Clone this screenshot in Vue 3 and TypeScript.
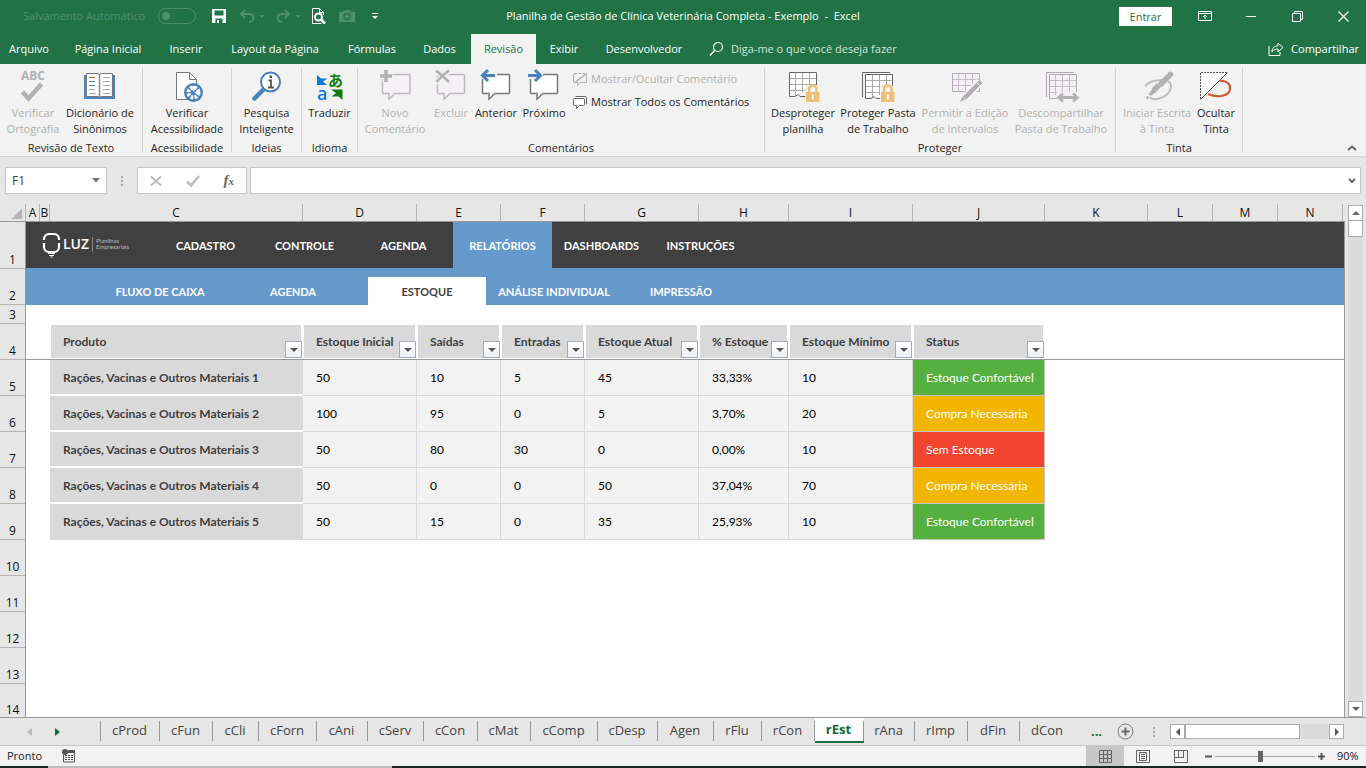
<script setup lang="ts">
import { ref } from 'vue'

interface Column { letter: string; width: number }
interface Product { name: string; values: string[]; status: string; tone: string }

const menu = [
  { label: 'Arquivo', width: 58 },
  { label: 'Página Inicial', width: 100 },
  { label: 'Inserir', width: 56 },
  { label: 'Layout da Página', width: 122 },
  { label: 'Fórmulas', width: 72 },
  { label: 'Dados', width: 63 },
  { label: 'Revisão', width: 65 },
  { label: 'Exibir', width: 56 },
  { label: 'Desenvolvedor', width: 104 },
]

const columns: Column[] = [
  { letter: 'A', width: 14 }, { letter: 'B', width: 10 }, { letter: 'C', width: 253 },
  { letter: 'D', width: 114 }, { letter: 'E', width: 84 }, { letter: 'F', width: 84 },
  { letter: 'G', width: 114 }, { letter: 'H', width: 90 }, { letter: 'I', width: 124 },
  { letter: 'J', width: 132 }, { letter: 'K', width: 103 }, { letter: 'L', width: 65 },
  { letter: 'M', width: 65 }, { letter: 'N', width: 65 },
]
const tableColumns = columns.slice(2, 10)

const rowHeights = [47, 36, 19, 36, 36, 36, 36, 36, 36, 36, 36, 36, 36, 33]

const headings = ['Produto', 'Estoque Inicial', 'Saídas', 'Entradas', 'Estoque Atual', '% Estoque', 'Estoque Mínimo', 'Status']

const products: Product[] = [
  { name: 'Rações, Vacinas e Outros Materiais 1', values: ['50', '10', '5', '45', '33,33%', '10'], status: 'Estoque Confortável', tone: 'good' },
  { name: 'Rações, Vacinas e Outros Materiais 2', values: ['100', '95', '0', '5', '3,70%', '20'], status: 'Compra Necessária', tone: 'warn' },
  { name: 'Rações, Vacinas e Outros Materiais 3', values: ['50', '80', '30', '0', '0,00%', '10'], status: 'Sem Estoque', tone: 'bad' },
  { name: 'Rações, Vacinas e Outros Materiais 4', values: ['50', '0', '0', '50', '37,04%', '70'], status: 'Compra Necessária', tone: 'warn' },
  { name: 'Rações, Vacinas e Outros Materiais 5', values: ['50', '15', '0', '35', '25,93%', '10'], status: 'Estoque Confortável', tone: 'good' },
]

const sections = ['CADASTRO', 'CONTROLE', 'AGENDA', 'RELATÓRIOS', 'DASHBOARDS', 'INSTRUÇÕES']
const reports = [
  { label: 'FLUXO DE CAIXA', width: 116 },
  { label: 'AGENDA', width: 150 },
  { label: 'ESTOQUE', width: 118 },
  { label: 'ANÁLISE INDIVIDUAL', width: 136 },
  { label: 'IMPRESSÃO', width: 118 },
]

const sheets = [
  { label: 'cProd', width: 59 }, { label: 'cFun', width: 53 }, { label: 'cCli', width: 46 },
  { label: 'cForn', width: 58 }, { label: 'cAni', width: 51 }, { label: 'cServ', width: 56 },
  { label: 'cCon', width: 54 }, { label: 'cMat', width: 53 }, { label: 'cComp', width: 67 },
  { label: 'cDesp', width: 60 }, { label: 'Agen', width: 56 }, { label: 'rFlu', width: 48 },
  { label: 'rCon', width: 53 }, { label: 'rEst', width: 49 }, { label: 'rAna', width: 51 },
  { label: 'rImp', width: 53 }, { label: 'dFin', width: 52 }, { label: 'dCon', width: 56 },
]

const cellRef = ref('F1')
const formula = ref('')
const zoom = ref(45)
const autosave = ref(false)
const px = (n: number) => ({ width: n + 'px' })
</script>

<template>
  <div class="app">
    <header class="titlebar">
      <div class="quick">
        <label class="autosave">Salvamento Automático
          <input v-model="autosave" type="checkbox" disabled>
        </label>
        <button class="q" aria-label="Salvar">
          <svg width="16" height="16" viewBox="0 0 16 16"><path d="M1 1h14v14H1z" fill="#fff" /><path d="M3.500 2.500h9v5h-9zM4.500 10.500h7V15h-7z" fill="#217346" /><path d="M6 12h2v3H6z" fill="#fff" /></svg>
        </button>
        <button class="q undo" aria-label="Desfazer" disabled>
          <svg width="26" height="16" viewBox="0 0 26 16"><path d="M6 2L2 6l4 4M2 6h8c6 0 6 7 0 8" fill="none" stroke="#4d9169" stroke-width="2" /><path d="M20 7h6l-3 3z" fill="#4d9169" /></svg>
        </button>
        <button class="q redo" aria-label="Refazer" disabled>
          <svg width="26" height="16" viewBox="0 0 26 16"><path d="M10 2l4 4-4 4M14 6H7C1 6 1 13 7 14" fill="none" stroke="#4d9169" stroke-width="2" /><path d="M20 7h6l-3 3z" fill="#4d9169" /></svg>
        </button>
        <button class="q" aria-label="Visualizar impressão">
          <svg width="16" height="16" viewBox="0 0 16 16"><path d="M1.500 15.500V.500h7l4 4M1.500 15.500h9M8.500 .500v4h4V7" fill="none" stroke="#fff" /><circle cx="7.500" cy="9" r="3.500" fill="#217346" stroke="#fff" stroke-width="2" /><path d="M10 11.500l4 4" stroke="#fff" stroke-width="2.500" /></svg>
        </button>
        <button class="q" aria-label="Câmera" disabled>
          <svg width="16" height="14" viewBox="0 0 16 14"><path d="M0 3h4l1-2h6l1 2h4v10H0z" fill="#4d9169" /><circle cx="8" cy="7.500" r="3" fill="none" stroke="#217346" stroke-width="1.500" /></svg>
        </button>
        <button class="q custom" aria-label="Personalizar">
          <svg width="8" height="8" viewBox="0 0 8 8"><path d="M1 1.500h6" stroke="#fff" /><path d="M1 4h6L4 7z" fill="#fff" /></svg>
        </button>
      </div>
      <h1>Planilha de Gestão de Clínica Veterinária Completa - Exemplo&nbsp; -&nbsp; Excel</h1>
      <div class="window">
        <button class="signin">Entrar</button>
        <button class="win" aria-label="Opções da faixa de opções"><svg width="14" height="12" viewBox="0 0 14 12"><path d="M.5 1.500h13v9H.5zM.5 3.500h13M7 9V5M5 7l2-2 2 2" fill="none" stroke="#fff" /></svg></button>
        <button class="win" aria-label="Minimizar"><svg width="11" height="11" viewBox="0 0 11 11"><path d="M0 5.500h10" stroke="#fff" /></svg></button>
        <button class="win" aria-label="Restaurar"><svg width="11" height="11" viewBox="0 0 11 11"><path d="M.5 2.500h8v8h-8zM2.500 2.500v-2h8v8h-2" fill="none" stroke="#fff" /></svg></button>
        <button class="win" aria-label="Fechar"><svg width="11" height="11" viewBox="0 0 11 11"><path d="M.5 .500l10 10M10.500 .500l-10 10" stroke="#fff" stroke-width="1.200" /></svg></button>
      </div>
    </header>

    <nav class="menubar">
      <button v-for="m in menu" :key="m.label" :class="{ active: m.label === 'Revisão' }" :style="px(m.width)">{{ m.label }}</button>
      <button class="tellme">
        <svg width="16" height="16" viewBox="0 0 16 16"><circle cx="10" cy="6" r="4.500" fill="none" stroke="#fff" stroke-width="1.200" /><path d="M7 9l-5 5.500" stroke="#fff" stroke-width="1.500" /></svg>
        Diga-me o que você deseja fazer
      </button>
      <button class="share">
        <svg width="16" height="14" viewBox="0 0 16 14"><path d="M1 4v9.500h11V10" fill="none" stroke="#fff" /><path d="M4 10c0-4 2-6 6-6V1l5 4.500-5 4.500V7C7 7 5 8 4 10z" fill="none" stroke="#fff" /></svg>
        Compartilhar
      </button>
    </nav>

    <section class="ribbon" aria-label="Revisão">
      <div class="group">
        <div class="tools">
          <button class="tool w58" disabled>
            <svg viewBox="0 0 36 36"><text x="18" y="12" text-anchor="middle" font-size="12" font-weight="700" fill="#b1b1b1">ABC</text><path d="M7.500 24l6 6.500L26.500 16" fill="none" stroke="#b1b1b1" stroke-width="4.500" /></svg>
            <span>Verificar<br>Ortografia</span>
          </button>
          <button class="tool w76">
            <svg viewBox="0 0 36 36"><path d="M2 7h31v24H2z" fill="#4a82bd" /><path d="M4.500 5.500h11q2 0 2 1.500 0-1.500 2-1.500h11v23h-11q-2 0-2 1.500 0-1.500-2-1.500h-11z" fill="#fff" stroke="#777" /><path d="M17.500 7v22" stroke="#888" stroke-width="1.500" /><path d="M7 13.500h6M7 17.500h6" stroke="#4a82bd" /><path d="M7 9.500h6" stroke="#d4552c" /><path d="M7 21.500h6M7 25.500h7M21 9.500h7M21 13.500h7M21 17.500h7M21 21.500h7M21 25.500h7" stroke="#aaa" /></svg>
            <span>Dicionário de<br>Sinônimos</span>
          </button>
        </div>
        <p>Revisão de Texto</p>
      </div>
      <div class="group">
        <div class="tools">
          <button class="tool w80">
            <svg viewBox="0 0 36 36"><path d="M7.500 4.500h13l7 7v20h-20z" fill="#fff" stroke="#777" /><path d="M20.500 4.500v7h7" fill="none" stroke="#777" /><circle cx="24.500" cy="24.500" r="9.500" fill="#4a82bd" /><circle cx="24.500" cy="24.500" r="5" fill="none" stroke="#fff" stroke-width="4" stroke-dasharray="2.600 1.327" /><path d="M24.500 18v6.500h6.500" stroke="#fff" stroke-width="1.500" fill="none" /><circle cx="24.500" cy="24.500" r="1.500" fill="#4a82bd" /></svg>
            <span>Verificar<br>Acessibilidade</span>
          </button>
        </div>
        <p>Acessibilidade</p>
      </div>
      <div class="group">
        <div class="tools">
          <button class="tool w61">
            <svg viewBox="0 0 36 36"><path d="M14 22l-8.500 8.500" stroke="#4a82bd" stroke-width="4.500" stroke-linecap="round" /><circle cx="21.500" cy="14" r="9.500" fill="#fff" stroke="#4a82bd" stroke-width="2" /><path d="M19.500 12.500h2.500v7M19 19.500h6" fill="none" stroke="#555" stroke-width="1.800" /><path d="M20.500 7.500h2.500v2.500h-2.500z" fill="#555" /></svg>
            <span>Pesquisa<br>Inteligente</span>
          </button>
        </div>
        <p>Ideias</p>
      </div>
      <div class="group">
        <div class="tools">
          <button class="tool w47">
            <svg viewBox="0 0 36 36"><path d="M5 7l4 3.500h6.500L11 13.500l4 3.500H5z" fill="#0f78d4" /><text class="kana" x="16" y="18" font-size="15" font-weight="700" fill="#107c10">あ</text><text x="5" y="32" font-size="18" font-weight="600" fill="#0f78d4">a</text><path d="M19 21.500h11.500V32l-4-3.500H19.500l4.500-3.500z" fill="#107c10" /></svg>
            <span>Traduzir</span>
          </button>
        </div>
        <p>Idioma</p>
      </div>
      <div class="group">
        <div class="tools">
          <button class="tool w66" disabled>
            <svg viewBox="0 0 36 36"><path d="M6.500 6.500h25.500q1 0 1 1v17q0 1-1 1H18l-6 5.500v-5.500H6.500q-1 0-1-1v-17q0-1 1-1z" fill="#f5f0f6" stroke="#bcb9bd" stroke-width="1.500" /><path d="M8.500 1v14M1.500 8h14" stroke="#f2f2f2" stroke-width="6" /><path d="M9 2v12M3 8h12" stroke="#b1b1b1" stroke-width="3.500" /></svg>
            <span>Novo<br>Comentário</span>
          </button>
          <button class="tool w46" disabled>
            <svg viewBox="0 0 36 36"><path d="M5.500 6.500h25q1 0 1 1v17q0 1-1 1H17l-6 5.500v-5.500H5.500q-1 0-1-1v-17q0-1 1-1z" fill="#f5f0f6" stroke="#bcb9bd" stroke-width="1.500" /><path d="M3 2l13 13M16 2L3 15" stroke="#f2f2f2" stroke-width="6" /><path d="M3 2.500q6 5 13 11.500M16 2.500Q9 7 3.500 14" fill="none" stroke="#b1b1b1" stroke-width="2.500" /></svg>
            <span>Excluir</span>
          </button>
          <button class="tool w44">
            <svg viewBox="0 0 36 36"><path d="M5.500 6.500h25q1 0 1 1v17q0 1-1 1H17l-6 5.500v-5.500H5.500q-1 0-1-1v-17q0-1 1-1z" fill="#fff" stroke="#777" stroke-width="1.500" /><path d="M2 7.500h17" stroke="#f2f2f2" stroke-width="7" /><path d="M4 7.500h13M10 2L4.500 7.500 10 13" fill="none" stroke="#4a82bd" stroke-width="3" /></svg>
            <span>Anterior</span>
          </button>
          <button class="tool w52">
            <svg viewBox="0 0 36 36"><path d="M5.500 6.500h25q1 0 1 1v17q0 1-1 1H17l-6 5.500v-5.500H5.500q-1 0-1-1v-17q0-1 1-1z" fill="#fff" stroke="#777" stroke-width="1.500" /><path d="M2 7.500h15" stroke="#f2f2f2" stroke-width="7" /><path d="M2 7.500h13M9 2l5.500 5.500L9 13" fill="none" stroke="#4a82bd" stroke-width="3" /></svg>
            <span>Próximo</span>
          </button>
          <div class="stack">
            <button disabled>
              <svg width="15" height="15" viewBox="0 0 15 15"><path d="M1 1.500h12" stroke="#b1b1b1" stroke-dasharray="3 1" /><path d="M.5 2v8M13.500 1v9.500h-6l-3 3v-3h-4" fill="none" stroke="#b1b1b1" /><path d="M1 11L13 2" stroke="#b1b1b1" stroke-width="1.500" /></svg>
              Mostrar/Ocultar Comentário
            </button>
            <button>
              <svg width="15" height="15" viewBox="0 0 15 15"><path d="M2.500 1.500h10q1 0 1 1v7" fill="none" stroke="#666" /><path d="M1.500 3.500h9q1 0 1 1v5q0 1-1 1h-4l-3 3v-3h-2q-1 0-1-1v-5q0-1 1-1z" fill="#fff" stroke="#666" /></svg>
              Mostrar Todos os Comentários
            </button>
          </div>
        </div>
        <p>Comentários</p>
      </div>
      <div class="group">
        <div class="tools">
          <button class="tool w68">
            <svg viewBox="0 0 36 36"><path d="M4.500 4.500h27v22h-13l-3-2-3 4h-8z" fill="#fff" /><path d="M10.500 5v23M17.500 5v20M24.500 5v18M5 10.500h27M5 16.500h27M5 22.500h17" stroke="#aaa" /><path d="M21 28.500h-6l-2-2-3 2H4.500v-24h27V17" fill="none" stroke="#666" /><path d="M20 17h16v19H20z" fill="#f2f2f2" opacity=".8" /><path d="M24 24v-4a4 4 0 0 1 7.500 0v4" fill="none" stroke="#ebc17a" stroke-width="2.500" /><path d="M21 24h13.500v10H21z" fill="#ebc17a" /><path d="M27.800 26.500v5" stroke="#fff" stroke-width="2" /></svg>
            <span>Desproteger<br>planilha</span>
          </button>
          <button class="tool w82">
            <svg viewBox="0 0 36 36"><path d="M5.500 6.500h27v22h-27z" fill="#fff" /><path d="M12.500 7v22M19.500 7v20M26.500 7v18M6 12.500h26M6 18.500h26M6 24.500h17" stroke="#aaa" /><path d="M2.500 29V4.500H30M21 30.500h-5l-2-2-3 2H5.500v-24h27V18" fill="none" stroke="#666" /><path d="M20 18h16v18H20z" fill="#f2f2f2" opacity=".8" /><path d="M24 24v-4a4 4 0 0 1 7.500 0v4" fill="none" stroke="#ebc17a" stroke-width="2.500" /><path d="M21 24h13.500v10H21z" fill="#ebc17a" /><path d="M27.800 26.500v5" stroke="#fff" stroke-width="2" /></svg>
            <span>Proteger Pasta<br>de Trabalho</span>
          </button>
          <button class="tool w92" disabled>
            <svg viewBox="0 0 36 36"><path d="M5.500 5.500h27v18h-27z" fill="#f5f0f6" stroke="#b1acb2" /><path d="M11.500 6v18M18.500 6v18M25.500 6v18M6 11.500h26M6 17.500h26" stroke="#c3bec4" /><path d="M33 14L17 31" stroke="#f2f2f2" stroke-width="8" /><path d="M34 13.500L17.500 30" stroke="#b1acb2" stroke-width="4.500" /><path d="M15.500 28.500L13 34l5.500-2.500z" fill="#b1acb2" /><path d="M29.500 14.500l4 4" stroke="#f2f2f2" /></svg>
            <span>Permitir a Edição<br>de Intervalos</span>
          </button>
          <button class="tool w100" disabled>
            <svg viewBox="0 0 36 36"><path d="M6.500 6.500h27v22h-27z" fill="#f5f0f6" /><path d="M12.500 7v20M19.500 7v20M26.500 7v20M7 12.500h26M7 18.500h26M7 24.500h26" stroke="#c3bec4" /><path d="M3.500 29V4.500H31M15 30.500H6.500v-24h27V26" fill="none" stroke="#b1acb2" /><path d="M14 24h22v10H14z" fill="#f2f2f2" /><path d="M16 29.500h18" stroke="#b1b1b1" stroke-width="3" /><path d="M20 25.500l-4.500 4 4.500 4M30 25.500l4.500 4-4.500 4" fill="none" stroke="#b1b1b1" stroke-width="2.500" /></svg>
            <span>Descompartilhar<br>Pasta de Trabalho</span>
          </button>
        </div>
        <p>Proteger</p>
      </div>
      <div class="group">
        <div class="tools">
          <button class="tool w74" disabled>
            <svg viewBox="0 0 36 36"><path d="M6 18c5-5 10-6 17-6M29 13c6 4 2 13-5 16-5 3-11 3-13 0" fill="none" stroke="#bbb" stroke-width="1.800" /><path d="M31.500 6.500L22 16" stroke="#b1b1b1" stroke-width="5.500" stroke-linecap="round" /><path d="M20 17l-5.500 5.500" stroke="#b1b1b1" stroke-width="5.500" /><path d="M14 20.500l3.500 3.500-6 4-2-2z" fill="#b1b1b1" /><circle cx="8.500" cy="29.500" r="1.500" fill="#b1b1b1" /></svg>
            <span>Iniciar Escrita<br>à Tinta</span>
          </button>
          <button class="tool w44">
            <svg viewBox="0 0 36 36"><path d="M21 12.500c8 0 12 4 11 9-1 6-12 9-22 4.500" fill="none" stroke="#d4552c" stroke-width="2" /><path d="M2.500 4.500h27l-27 27z" fill="#fff" /><path d="M2.500 31V4.500H29" fill="none" stroke="#555" stroke-dasharray="2 1" /><path d="M29.500 4.500l-27 27" stroke="#555" /></svg>
            <span>Ocultar<br>Tinta</span>
          </button>
        </div>
        <p>Tinta</p>
      </div>
      <button class="collapse" aria-label="Recolher faixa"><svg width="10" height="6" viewBox="0 0 10 6"><path d="M1 5l4-3.500L9 5" fill="none" stroke="#666" stroke-width="2" /></svg></button>
    </section>

    <section class="formulabar">
      <div class="namebox">
        <input v-model="cellRef" aria-label="Caixa de nome">
        <svg width="8" height="5" viewBox="0 0 8 5"><path d="M0 0h8L4 4.500z" fill="#777" /></svg>
      </div>
      <span class="dots" />
      <div class="fxbox">
        <button aria-label="Cancelar" disabled><svg width="12" height="12" viewBox="0 0 12 12"><path d="M1 1.500l10 9M11 1.500l-10 9" stroke="#bbb" stroke-width="1.800" /></svg></button>
        <button aria-label="Inserir" disabled><svg width="14" height="12" viewBox="0 0 14 12"><path d="M1 6.500l4 4L13 1" fill="none" stroke="#bbb" stroke-width="2.500" /></svg></button>
        <button aria-label="Inserir função" class="fx">f<small>x</small></button>
      </div>
      <div class="formula">
        <input v-model="formula" aria-label="Barra de fórmulas">
        <svg width="8" height="6" viewBox="0 0 8 6"><path d="M1 1l3 3 3-3" fill="none" stroke="#666" stroke-width="2" /></svg>
      </div>
    </section>

    <main class="workspace">
      <div class="grid">
        <div class="colheads">
          <span class="corner" />
          <span v-for="c in columns" :key="c.letter" class="colhead" :style="px(c.width)">{{ c.letter }}</span>
        </div>
        <div class="gridbody">
          <div class="rowheads">
            <span v-for="(h, i) in rowHeights" :key="i" :style="{ height: h + 'px' }">{{ i + 1 }}</span>
          </div>
          <div class="sheet">
            <nav class="sections">
              <svg class="logo" width="90" height="26" viewBox="0 0 90 26">
                <path d="M2 8V7a5 5 0 0 1 5-5h5a5 5 0 0 1 5 5v1M2 11v4a5 5 0 0 0 5 5h5a5 5 0 0 0 5-5v-4" fill="none" stroke="#fff" stroke-width="2.200" />
                <path d="M6 21.500h7M7 23.500h5M8.500 25h2" stroke="#fff" stroke-width="1.200" />
                <text x="21" y="17" font-size="14" font-weight="600" fill="#fff">LUZ</text>
                <path d="M50.500 5v15" stroke="#888" />
                <text class="tag" x="54" y="11" font-size="6" fill="#bbb">Planilhas</text>
                <text class="tag" x="54" y="17" font-size="6" fill="#bbb">Empresariais</text>
              </svg>
              <a v-for="s in sections" :key="s" href="#" :class="{ current: s === 'RELATÓRIOS' }">{{ s }}</a>
            </nav>
            <nav class="reports">
              <a v-for="r in reports" :key="r.label" href="#" :class="{ current: r.label === 'ESTOQUE' }" :style="px(r.width)">{{ r.label }}</a>
            </nav>
            <div class="freeze">
              <table>
                <colgroup><col v-for="c in tableColumns" :key="c.letter" :style="px(c.width)"></colgroup>
                <thead>
                  <tr>
                    <th v-for="h in headings" :key="h" scope="col">
                      {{ h }}
                      <button class="filter" :aria-label="'Filtrar ' + h"><svg width="8" height="4" viewBox="0 0 8 4"><path d="M0 0h8L4 4z" fill="#555" /></svg></button>
                    </th>
                  </tr>
                </thead>
                <tbody>
                  <tr v-for="p in products" :key="p.name">
                    <th scope="row">{{ p.name }}</th>
                    <td v-for="(v, i) in p.values" :key="i">{{ v }}</td>
                    <td class="status" :class="p.tone">{{ p.status }}</td>
                  </tr>
                </tbody>
              </table>
            </div>
          </div>
        </div>
      </div>
      <div class="vscroll">
        <button aria-label="Rolar para cima"><svg width="8" height="4" viewBox="0 0 8 4"><path d="M0 4h8L4 0z" fill="#666" /></svg></button>
        <span class="thumb" />
        <button class="down" aria-label="Rolar para baixo"><svg width="8" height="4" viewBox="0 0 8 4"><path d="M0 0h8L4 4z" fill="#666" /></svg></button>
      </div>
    </main>

    <nav class="sheettabs">
      <div class="arrows">
        <button aria-label="Anterior" disabled><svg width="5" height="8" viewBox="0 0 5 8"><path d="M5 0v8L0 4z" fill="#bbb" /></svg></button>
        <button aria-label="Seguinte"><svg width="5" height="8" viewBox="0 0 5 8"><path d="M0 0v8l5-4z" fill="#0e6b37" /></svg></button>
      </div>
      <button v-for="s in sheets" :key="s.label" class="tab" :class="{ active: s.label === 'rEst' }" :style="px(s.width)">{{ s.label }}</button>
      <button class="more">...</button>
      <button class="add" aria-label="Nova planilha"><svg width="17" height="17" viewBox="0 0 17 17"><circle cx="8.500" cy="8.500" r="7.500" fill="none" stroke="#777" /><path d="M8.500 4.500v8M4.500 8.500h8" stroke="#666" stroke-width="2" /></svg></button>
      <div class="hscroll">
        <span class="dots" />
        <button aria-label="Rolar à esquerda"><svg width="4" height="8" viewBox="0 0 4 8"><path d="M4 0v8L0 4z" fill="#555" /></svg></button>
        <span class="track"><span class="thumb" /></span>
        <button aria-label="Rolar à direita"><svg width="4" height="8" viewBox="0 0 4 8"><path d="M0 0v8l4-4z" fill="#555" /></svg></button>
      </div>
    </nav>

    <footer class="statusbar">
      <span class="ready">Pronto</span>
      <button class="macro" aria-label="Gravar macro"><svg width="14" height="14" viewBox="0 0 14 14"><path d="M1.500 6v7h11V1.500H7" fill="none" stroke="#555" /><path d="M6 1h7v3H6z" fill="#555" /><path d="M3 6.500h8M3 8.500h8M3 10.500h8" stroke="#555" stroke-dasharray="2 1" /><circle cx="3" cy="3" r="3" fill="#555" /></svg></button>
      <div class="views">
        <button class="active" aria-label="Normal"><svg width="13" height="13" viewBox="0 0 13 13"><path d="M.5 .500h12v12H.5zM4.500 .500v12M8.500 .500v12M.5 4.500h12M.5 8.500h12" fill="none" stroke="#666" /></svg></button>
        <button aria-label="Layout da Página"><svg width="14" height="13" viewBox="0 0 14 13"><path d="M.5 .500h13v12H.5zM3.500 2.500h7v8h-7zM5 4.500h4M5 6.500h4M5 8.500h4" fill="none" stroke="#666" /></svg></button>
        <button aria-label="Quebra de Página"><svg width="14" height="13" viewBox="0 0 14 13"><path d="M.5 .500h13v12H.5zM4.500 .500v7M9.500 .500v7M0 7.500h10" fill="none" stroke="#666" /></svg></button>
      </div>
      <button class="step" aria-label="Reduzir"><svg width="7" height="7" viewBox="0 0 7 7"><path d="M0 3.500h7" stroke="#555" stroke-width="2" /></svg></button>
      <input v-model="zoom" type="range" min="0" max="100" aria-label="Zoom">
      <button class="step" aria-label="Ampliar"><svg width="7" height="7" viewBox="0 0 7 7"><path d="M0 3.500h7M3.500 0v7" stroke="#555" stroke-width="2" /></svg></button>
      <span class="percent">90%</span>
    </footer>
    <div class="taskbar"><i /><b /></div>
  </div>
</template>

<style>
body { margin: 0; }
</style>

<style scoped>
* { box-sizing: border-box; }
.app {
  display: flex; flex-direction: column; height: 100vh; overflow: hidden;
  background: #e6e6e6; color: #262626; font: 11px/16px "Open Sans", "Noto Sans", sans-serif;
}
button { border: 0; padding: 0; margin: 0; background: none; font: inherit; color: inherit; white-space: nowrap; flex: none; }
svg { display: block; flex: none; }
h1, p { margin: 0; font: inherit; }

.titlebar { display: flex; align-items: center; height: 32px; flex: none; background: #217346; color: #fff; }
.quick, .window { flex: 1 1 0; display: flex; align-items: center; }
.quick { gap: 12px; }
.window { justify-content: flex-end; }
.autosave { display: flex; align-items: center; justify-content: space-between; width: 173px; margin: 0 3px 0 23px; color: #4d9169; white-space: nowrap; }
.autosave input { appearance: none; width: 38px; height: 16px; margin: 0; padding: 3px; border: 1px solid #4d9169; border-radius: 8px; }
.autosave input::before { content: ""; display: block; width: 8px; height: 8px; border-radius: 50%; background: #4d9169; }
.undo, .redo { margin-right: -2px; }
.custom { margin-left: 4px; }
.signin { width: 53px; height: 19px; margin-right: 10px; background: #fff; color: #217346; line-height: 19px; }
.win { width: 46px; height: 32px; display: flex; align-items: center; justify-content: center; }

.menubar { display: flex; height: 32px; flex: none; background: #217346; color: #fff; }
.menubar button { padding-top: 2px; }
.menubar .active { background: #f2f2f2; color: #217346; margin-top: 2px; padding-top: 0; }
.tellme, .share { display: flex; align-items: center; gap: 7px; }
.tellme { margin-left: 12px; color: #d3e5da; }
.menubar .share { margin-left: auto; padding-right: 7px; }

.ribbon { display: flex; height: 93px; flex: none; background: #f2f2f2; border-bottom: 1px solid #d2d2d2; }
.group { display: flex; flex-direction: column; height: 84px; margin-top: 4px; padding: 0 4px; border-right: 1px solid #d2d2d2; }
.tools { display: flex; height: 72px; flex: none; justify-content: center; }
.group p { text-align: center; flex: none; }
.tool { display: flex; flex-direction: column; align-items: center; }
.tool svg { width: 36px; height: 36px; margin-bottom: 1px; overflow: visible; }
.ribbon button:disabled { color: #b1b1b1; }
.kana { font-family: "Noto Sans CJK JP", sans-serif; }
.w44 { width: 44px; } .w46 { width: 46px; } .w47 { width: 47px; } .w52 { width: 52px; } .w58 { width: 58px; }
.w61 { width: 61px; } .w66 { width: 66px; } .w68 { width: 68px; } .w74 { width: 74px; } .w76 { width: 76px; }
.w80 { width: 80px; } .w82 { width: 82px; } .w92 { width: 92px; } .w100 { width: 100px; }
.stack { display: flex; flex-direction: column; gap: 7px; padding: 3px 0 0 3px; width: 190px; }
.stack button { display: flex; gap: 3px; align-items: center; height: 16px; }
.collapse { margin: auto 9px 5px auto; }

.formulabar { display: flex; align-items: center; height: 47px; flex: none; padding: 0 5px; font-size: 12px; }
.namebox, .fxbox, .formula { display: flex; align-items: center; height: 27px; border: 1px solid #c6c6c6; background: #fff; }
.namebox { width: 102px; padding: 0 6px; }
.formulabar input { border: 0; padding: 0; min-width: 0; flex: 1; background: none; font: inherit; color: #444; outline: 0; }
.dots { width: 2px; height: 10px; background: repeating-linear-gradient(#aaa 0 2px, transparent 2px 4px); }
.formulabar .dots { margin: 0 14px; }
.fxbox { width: 110px; justify-content: space-around; margin-right: 3px; }
.fx { font: italic 700 15px/20px "Liberation Serif", serif; color: #666; }
.fx small { font-size: 11px; }
.formula { flex: 1; padding: 0 4px; }

.workspace { display: flex; flex: 1; min-height: 0; font-size: 12px; }
.grid { flex: 1; min-width: 0; display: flex; flex-direction: column; overflow: hidden; }
.colheads { display: flex; height: 18px; flex: none; border-bottom: 1px solid #999; overflow: hidden; color: #111; }
.corner { width: 26px; flex: none; border-right: 1px solid #b5b5b5; background: linear-gradient(135deg, transparent 50%, #b5b5b5 50%) 11px 4px / 11px 11px no-repeat; }
.colhead { flex: none; display: flex; justify-content: center; border-right: 1px solid #b5b5b5; line-height: 17px; }
.gridbody { display: flex; flex: 1; min-height: 0; overflow: hidden; border-right: 1px solid #999; }
.rowheads { width: 26px; flex: none; border-right: 1px solid #999; color: #111; }
.rowheads span { display: flex; justify-content: center; align-items: flex-end; border-bottom: 1px solid #b5b5b5; line-height: 17px; }
.rowheads span:last-child { border: 0; line-height: 15px; }
.sheet { flex: 1; min-width: 0; background: #fff; font-family: Lato, sans-serif; }
.sheet a { color: #fff; font-size: 11px; font-weight: 700; text-decoration: none; text-align: center; white-space: nowrap; }
.sections { display: flex; height: 46px; background: #404040; }
.logo { margin: 10px 24px 0 16px; font-family: "Open Sans", sans-serif; }
.tag { font-family: Lato, sans-serif; }
.sections a { width: 99px; line-height: 48px; }
.sections .current { background: #6699cc; }
.reports { display: flex; align-items: flex-end; height: 37px; padding-left: 76px; background: #6699cc; }
.reports a { padding-top: 2px; line-height: 26px; }
.sheet .reports .current { background: #fff; color: #404040; }
.freeze { position: relative; padding: 19px 0 0 24px; }
.freeze::after { content: ""; position: absolute; left: 0; right: 0; top: 54px; height: 1px; background: #999; }
table { table-layout: fixed; width: 995px; border-spacing: 0; color: #000; }
th, td { height: 36px; padding: 0 0 0 13px; text-align: left; white-space: nowrap; }
th { background: #d9d9d9; color: #404040; font-weight: 700; }
thead th { position: relative; border: solid #fff; border-width: 1px 2px 2px 1px; padding-left: 12px; }
tbody th { border-bottom: 2px solid #fff; padding-top: 2px; }
tbody tr:last-child th { border-color: #d9d9d9; }
td { background: #f2f2f2; border: solid #d9d9d9; border-width: 0 1px 1px 0; }
.status { color: #fff; border-color: #c6c6c6; }
.good { background: #55b03f; } .warn { background: #f2b600; } .bad { background: #f2452e; }
.filter { position: absolute; right: -1px; bottom: 0; width: 17px; height: 17px; display: flex; align-items: center; justify-content: center; border: 1px solid #a3abb8; background: linear-gradient(#fff, #eef1f6); }

.vscroll { width: 15px; margin: 1px 3px 0 3px; background: #dbdbdb; display: flex; flex-direction: column; flex: none; }
.vscroll button, .vscroll .thumb { height: 16px; border: 1px solid #ababab; background: #fff; display: flex; align-items: center; justify-content: center; }
.vscroll .thumb { height: 17px; margin-top: -1px; }
.vscroll .down { margin-top: auto; }

.sheettabs { display: flex; height: 29px; flex: none; border-top: 1px solid #999; border-bottom: 1px solid #c6c6c6; color: #444; font-size: 13px; }
.arrows { width: 101px; flex: none; display: flex; gap: 23px; padding-left: 27px; align-items: center; }
.tab { position: relative; height: 25px; padding: 0 2px 1px 0; }
.tab::before { content: ""; position: absolute; left: -1px; top: 3px; width: 1px; height: 20px; background: #999; }
.tab.active { background: #fff; color: #0e6b37; font-weight: 700; border-bottom: 2px solid #217346; }
.more { width: 41px; height: 25px; color: #0e6b37; font-weight: 700; }
.add { display: flex; align-items: center; height: 27px; }
.hscroll { display: flex; align-items: center; margin: 0 22px 0 auto; flex: none; }
.hscroll .dots { margin-right: 15px; }
.hscroll button { width: 15px; height: 15px; border: 1px solid #ababab; background: #fff; display: flex; align-items: center; justify-content: center; }
.track { width: 144px; height: 15px; background: #dbdbdb; }
.track .thumb { display: block; width: 115px; height: 15px; border: 1px solid #ababab; background: #fff; }

.statusbar { display: flex; align-items: center; height: 20px; flex: none; background: #f2f2f2; }
.ready { padding-left: 7px; width: 62px; }
.views { display: flex; margin: 0 5px 0 auto; }
.views button { width: 38px; height: 20px; display: flex; align-items: center; justify-content: center; }
.views .active { background: #c6c6c6; }
.statusbar input { appearance: none; width: 100px; height: 12px; margin: 0 3px; background: linear-gradient(#aaa, #aaa) center / 100% 1px no-repeat; }
.statusbar input::-webkit-slider-thumb { appearance: none; width: 5px; height: 11px; background: #666; }
.percent { width: 41px; padding-left: 12px; }
.taskbar { display: flex; justify-content: space-between; height: 2px; flex: none; background: #bbb; }
.taskbar i { width: 48px; background: #1c2420; }
.taskbar b { width: calc(100% - 392px); background: #1c2420; }
</style>
